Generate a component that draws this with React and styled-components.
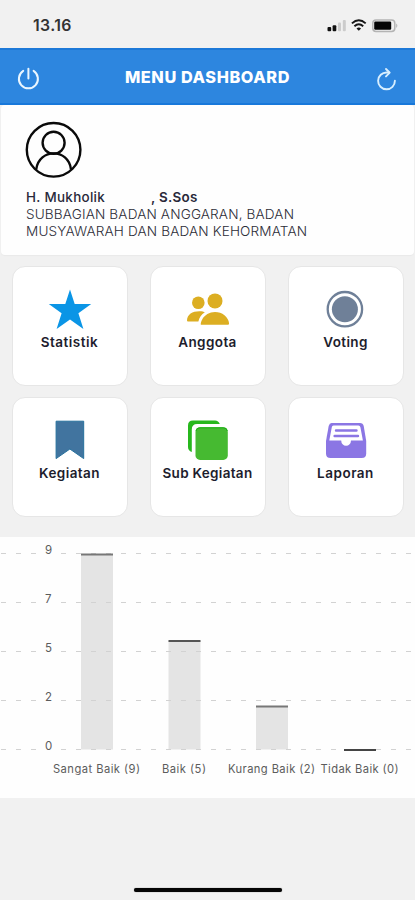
import React from "react";
import styled, { createGlobalStyle } from "styled-components";

const GlobalStyle = createGlobalStyle`
  * { box-sizing: border-box; }
  body { margin: 0; background: #f1f1f1; font-family: Inter, "Liberation Sans", sans-serif; }
  svg { display: block; }
`;

const Screen = styled.div`
  width: 415px;
  height: 900px;
  display: flex;
  flex-direction: column;
  overflow: hidden;
  background: #f1f1f1;
`;

const StatusBar = styled.div`
  height: 48px;
  flex: none;
  display: flex;
  justify-content: space-between;
  padding: 16px 16px 0 33px;
`;

const Clock = styled.span`
  font-size: 15.8px;
  line-height: 20px;
  font-weight: 600;
  letter-spacing: 0.4px;
  color: #333;
`;

const Header = styled.header`
  height: 57px;
  flex: none;
  display: grid;
  grid-template-columns: 60px 1fr 60px;
  align-items: center;
  background: #2d86df;
  border-top: 2px solid #1d79d8;
  border-bottom: 2px solid #1878da;
`;

const Title = styled.h1`
  margin: 0;
  text-align: center;
  font-size: 16.3px;
  line-height: 20px;
  font-weight: 800;
  letter-spacing: 0.58px;
  color: #fff;
`;

const HeaderButton = styled.button`
  padding: ${(p) => (p.$end ? "6px 0 0 18px" : "5px 0 0 15px")};
  border: 0;
  background: none;
`;

const Profile = styled.section`
  height: 150px;
  flex: none;
  margin: 0 1px;
  padding: 16px 25px 0 24px;
  background: #fefefe;
  border-radius: 4px;
  box-shadow: 0 1px 1px #e9e9e9;
`;

const Person = styled.div`
  display: flex;
  margin-top: 10px;
  padding-left: 1px;
  font-size: 13.4px;
  line-height: 17px;
  font-weight: 500;
  color: #29293a;
`;

const FirstName = styled.span`
  width: 125px;
  letter-spacing: 0.32px;
`;

const Degree = styled.span`
  font-weight: 600;
  letter-spacing: 0.3px;
`;

const Department = styled.div`
  padding-left: 1px;
  font-size: 13.6px;
  line-height: 16.5px;
  font-weight: 300;
  letter-spacing: 0.14px;
  color: #2c2c37;
  white-space: nowrap;
`;

const MenuGrid = styled.nav`
  display: grid;
  flex: none;
  grid-template-columns: repeat(3, 116px);
  grid-auto-rows: 120px;
  gap: 11px 22px;
  padding: 11px 0 0 12px;
`;

const Tile = styled.button`
  display: flex;
  flex-direction: column;
  align-items: center;
  padding: 21px 1px 0 0;
  border: 1px solid #e6e6e6;
  border-radius: 13px;
  background: #fff;
  font-family: inherit;
`;

const TileLabel = styled.span`
  margin-top: 2px;
  font-size: 13.5px;
  line-height: 19px;
  font-weight: 600;
  letter-spacing: ${(p) => p.$tracking}px;
  color: #1d1d2d;
  white-space: nowrap;
`;

const ChartPanel = styled.section`
  height: 261px;
  flex: none;
  margin-top: 20px;
  background: #fefefe;
`;

const ChartText = styled.text`
  font-family: Inter, sans-serif;
  font-size: ${(p) => (p.$axis ? 11.5 : 11.2)}px;
  fill: #5c5c5c;
`;

const HomeArea = styled.footer`
  flex: 1;
  display: flex;
  justify-content: center;
  align-items: flex-end;
  padding: 0 0 8px 1px;
`;

const HomeIndicator = styled.div`
  width: 148px;
  height: 4px;
  border-radius: 2px;
  background: #050505;
  box-shadow: 0 0 1px #555;
`;

const StatusIcons = () => (
  <svg width="76" height="20" viewBox="0 0 76 20">
    <rect x="4.5" y="11" width="3.7" height="4.2" rx="1" fill="#111" />
    <rect x="9.6" y="9.2" width="3.7" height="6" rx="1" fill="#111" />
    <rect x="15" y="6.5" width="3" height="8.7" rx="1" fill="#ccc" />
    <rect x="19.8" y="4" width="3" height="11.2" rx="1" fill="#ccc" />
    <g fill="none" stroke="#151515" strokeWidth="1.9">
      <path d="M28.9 7.4Q35.8 1.2 42.7 7.4" />
      <path d="M31.4 10.2Q35.8 6.2 40.2 10.2" />
    </g>
    <path d="M33.5 12.4Q35.8 10.4 38.1 12.4L35.8 14.8Z" fill="#151515" />
    <rect x="49.8" y="4" width="22" height="11.4" rx="3.2" fill="#f1f1f1" stroke="#b4b4b4" strokeWidth="1.5" />
    <rect x="51.2" y="5.6" width="17" height="8.2" rx="1.2" fill="#050505" />
    <path d="M73.2 7.5Q75.6 9.7 73.2 11.9Z" fill="#b4b4b4" />
  </svg>
);

const PowerIcon = () => (
  <svg width="26" height="26" viewBox="0 0 26 26" fill="none" stroke="#eaf6ff" strokeWidth="2" strokeLinecap="round">
    <path d="M8.2 4.9A9.5 9.5 0 1 0 18.6 4.9" />
    <path d="M13.4 2.8V12.6" />
  </svg>
);

const RefreshIcon = () => (
  <svg width="26" height="26" viewBox="0 0 26 26" fill="none" stroke="#d8efff" strokeWidth="1.9" strokeLinecap="round" strokeLinejoin="round">
    <path d="M16 5.5H13.8A8.4 8.4 0 1 0 21.9 13.8" />
    <path d="M13 2L16.7 5.7L13 9.4" />
  </svg>
);

const Avatar = () => (
  <svg width="58" height="58" viewBox="0 0 58 58" fill="none" stroke="#0a0a0a" strokeWidth="2.4">
    <circle cx="28.6" cy="28.8" r="26.8" />
    <circle cx="28.6" cy="21.8" r="11" />
    <path d="M11.2 48.3C14 27 43.5 27 46 48.3" />
  </svg>
);

const icons = {
  star: (
    <path d="M25 1.6L29.7 16H46.2L33.4 25.3L38.4 41L25 31.6L11.6 41L16.6 25.3L3.8 16H20.3Z" fill="#0a95e6" />
  ),
  people: (
    <g fill="#dcae22">
      <circle cx="15.3" cy="14.8" r="6.3" />
      <circle cx="32" cy="12.9" r="7.5" />
      <path d="M4 32.6C4 26.5 9.4 23.3 16.4 23.3C19.1 23.3 20.9 23.8 21.9 24.3C18.4 26.5 16.2 29.5 15.4 33.5H5Q4 33.5 4 32.6Z" />
      <path d="M18.2 36.8C17.2 36.8 18 33.5 19.2 31.5C21.5 27.2 26.5 24.1 32 24.1C39 24.1 45.6 28.9 46.1 35.6Q46.1 36.8 44.9 36.8Z" />
    </g>
  ),
  vote: (
    <g>
      <circle cx="23.9" cy="21.2" r="17.2" fill="none" stroke="#6f8098" strokeWidth="2.3" />
      <circle cx="23.9" cy="21.2" r="13" fill="#6f8098" />
    </g>
  ),
  bookmark: (
    <path d="M11.1 2.2H38.7V39.6L24.9 30L11.1 39.6Z" fill="#41749f" stroke="#27719d" strokeWidth="1" />
  ),
  copies: (
    <g>
      <path d="M36.8 5Q35.5 1.4 32 1.4H10Q5 1.4 5 6.4V28Q5 31.5 8.8 33V10.5Q8.8 5 14.2 5Z" fill="#27b81d" />
      <rect x="12.5" y="8.3" width="32.3" height="32.6" rx="4.5" fill="#46ba31" />
      <path d="M13 12Q13.2 8.8 17 8.8H40.3Q44 8.8 44.3 12" fill="none" stroke="#19af14" strokeWidth="1" />
    </g>
  ),
  archive: (
    <g>
      <path d="M10.5 4H39Q42 4 42.7 7L45.2 22V34.5Q45.2 39 40.7 39H9.5Q5 39 5 34.5V22L7.7 7Q8.5 4 10.5 4Z" fill="#8b76e4" />
      <path d="M12.5 6.6H37.5Q39 6.6 39.4 8.2L41.9 21.5H30A4.9 5.3 0 0 1 20.2 21.5H8.3L10.8 8.2Q11 6.6 12.5 6.6Z" fill="#fff" />
      <path d="M15 11.5H35.5M13.6 17H37" stroke="#8b76e4" strokeWidth="2.4" strokeLinecap="round" />
    </g>
  ),
};

const tiles = [
  { label: "Statistik", icon: "star", tracking: 0.5 },
  { label: "Anggota", icon: "people", tracking: 0.4 },
  { label: "Voting", icon: "vote", tracking: 0.35 },
  { label: "Kegiatan", icon: "bookmark", tracking: 0.42 },
  { label: "Sub Kegiatan", icon: "copies", tracking: 0.3 },
  { label: "Laporan", icon: "archive", tracking: 0.5 },
];

const bars = [
  { label: "Sangat Baik (9)", x: 81, top: 17.5, left: 53, width: 87, cap: "#777" },
  { label: "Baik (5)", x: 168.5, top: 104, left: 162, width: 44, cap: "#555" },
  { label: "Kurang Baik (2)", x: 256, top: 169.5, left: 228, width: 87, cap: "#777" },
  { label: "Tidak Baik (0)", x: 344, top: 213, left: 320.5, width: 78, cap: "#444" },
];

const ticks = [9, 7, 5, 2, 0];

const RatingChart = () => (
  <svg width="415" height="261" viewBox="0 0 415 261">
    {bars.map((b) => (
      <rect key={b.label} x={b.x} y={b.top} width="32" height={Math.max(0, 212.5 - b.top)} fill="#e4e4e4" />
    ))}
    {ticks.map((t, i) => (
      <g key={t}>
        <path d={`M1 ${16.5 + i * 49}H415`} stroke="#d2d2d2" strokeWidth="1" strokeDasharray="5 10" />
        <rect x="43" y={14 + i * 49} width="12" height="6" fill="#fefefe" />
        <ChartText $axis x="45" y={17.2 + i * 49}>{t}</ChartText>
      </g>
    ))}
    {bars.map((b) => (
      <g key={b.label}>
        <rect x={b.x} y={b.top - 1} width="32" height="2" fill={b.cap} />
        <ChartText x={b.left} y="236.2" textLength={b.width}>{b.label}</ChartText>
      </g>
    ))}
  </svg>
);

export default function App() {
  return (
    <>
      <GlobalStyle />
      <Screen>
        <StatusBar>
          <Clock>13.16</Clock>
          <StatusIcons />
        </StatusBar>
        <Header>
          <HeaderButton aria-label="Keluar"><PowerIcon /></HeaderButton>
          <Title>MENU DASHBOARD</Title>
          <HeaderButton $end aria-label="Muat ulang"><RefreshIcon /></HeaderButton>
        </Header>
        <Profile>
          <Avatar />
          <Person>
            <FirstName>H. Mukholik</FirstName>
            <Degree>, S.Sos</Degree>
          </Person>
          <Department>
            <div>SUBBAGIAN BADAN ANGGARAN, BADAN</div>
            <div>MUSYAWARAH DAN BADAN KEHORMATAN</div>
          </Department>
        </Profile>
        <MenuGrid>
          {tiles.map((t) => (
            <Tile key={t.label}>
              <svg width="50" height="43" viewBox="0 0 50 43">{icons[t.icon]}</svg>
              <TileLabel $tracking={t.tracking}>{t.label}</TileLabel>
            </Tile>
          ))}
        </MenuGrid>
        <ChartPanel><RatingChart /></ChartPanel>
        <HomeArea><HomeIndicator /></HomeArea>
      </Screen>
    </>
  );
}
